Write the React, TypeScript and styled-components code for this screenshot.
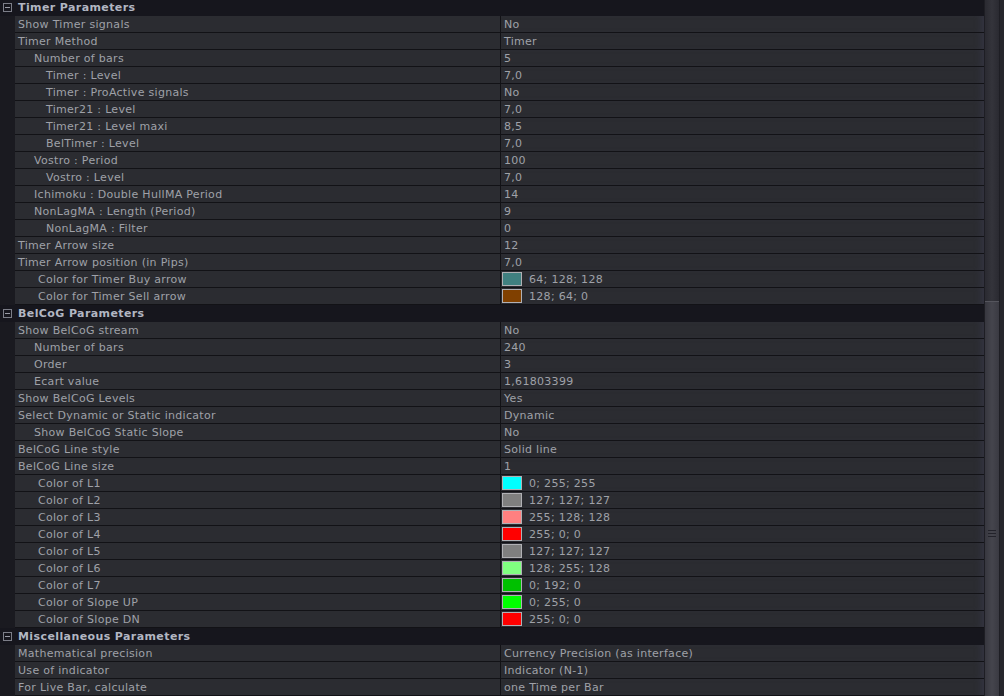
import styled, { createGlobalStyle } from 'styled-components';

const GlobalStyle = createGlobalStyle`
  html, body {
    margin: 0;
    padding: 0;
    background: #16161c;
    overflow: hidden;
  }
  body {
    font-family: 'DejaVu Sans', Verdana, sans-serif;
    font-size: 11px;
  }
`;

type Prop = {
  name: string;
  value: string;
  indent?: number;
  color?: string;
};

type Section = {
  title: string;
  props: Prop[];
};

const sections: Section[] = [
  {
    title: 'Timer Parameters',
    props: [
      { name: 'Show Timer signals', value: 'No' },
      { name: 'Timer Method', value: 'Timer' },
      { name: 'Number of bars', value: '5', indent: 16 },
      { name: 'Timer : Level', value: '7,0', indent: 28 },
      { name: 'Timer : ProActive signals', value: 'No', indent: 28 },
      { name: 'Timer21 : Level', value: '7,0', indent: 28 },
      { name: 'Timer21 : Level maxi', value: '8,5', indent: 28 },
      { name: 'BelTimer : Level', value: '7,0', indent: 28 },
      { name: 'Vostro : Period', value: '100', indent: 16 },
      { name: 'Vostro : Level', value: '7,0', indent: 28 },
      { name: 'Ichimoku : Double HullMA Period', value: '14', indent: 16 },
      { name: 'NonLagMA : Length (Period)', value: '9', indent: 16 },
      { name: 'NonLagMA : Filter', value: '0', indent: 28 },
      { name: 'Timer Arrow size', value: '12' },
      { name: 'Timer Arrow position (in Pips)', value: '7,0' },
      { name: 'Color for Timer Buy arrow', value: '64; 128; 128', indent: 20, color: '#408080' },
      { name: 'Color for Timer Sell arrow', value: '128; 64; 0', indent: 20, color: '#804000' },
    ],
  },
  {
    title: 'BelCoG Parameters',
    props: [
      { name: 'Show BelCoG stream', value: 'No' },
      { name: 'Number of bars', value: '240', indent: 16 },
      { name: 'Order', value: '3', indent: 16 },
      { name: 'Ecart value', value: '1,61803399', indent: 16 },
      { name: 'Show BelCoG Levels', value: 'Yes' },
      { name: 'Select Dynamic or Static indicator', value: 'Dynamic' },
      { name: 'Show BelCoG Static Slope', value: 'No', indent: 16 },
      { name: 'BelCoG Line style', value: 'Solid line' },
      { name: 'BelCoG Line size', value: '1' },
      { name: 'Color of L1', value: '0; 255; 255', indent: 20, color: '#00ffff' },
      { name: 'Color of L2', value: '127; 127; 127', indent: 20, color: '#7f7f7f' },
      { name: 'Color of L3', value: '255; 128; 128', indent: 20, color: '#ff8080' },
      { name: 'Color of L4', value: '255; 0; 0', indent: 20, color: '#ff0000' },
      { name: 'Color of L5', value: '127; 127; 127', indent: 20, color: '#7f7f7f' },
      { name: 'Color of L6', value: '128; 255; 128', indent: 20, color: '#80ff80' },
      { name: 'Color of L7', value: '0; 192; 0', indent: 20, color: '#00c000' },
      { name: 'Color of Slope UP', value: '0; 255; 0', indent: 20, color: '#00ff00' },
      { name: 'Color of Slope DN', value: '255; 0; 0', indent: 20, color: '#ff0000' },
    ],
  },
  {
    title: 'Miscellaneous Parameters',
    props: [
      { name: 'Mathematical precision', value: 'Currency Precision (as interface)' },
      { name: 'Use of indicator', value: 'Indicator (N-1)' },
      { name: 'For Live Bar, calculate', value: 'one Time per Bar' },
    ],
  },
];

const Frame = styled.div`
  display: flex;
  width: 1004px;
  height: 696px;
  overflow: hidden;
`;

const Grid = styled.div`
  width: 984px;
  margin-top: -1px;
  display: flex;
  flex-direction: column;
`;

const HeaderRow = styled.div`
  display: flex;
  align-items: center;
  height: 17px;
  flex-shrink: 0;
  background: #16161d;
`;

const Toggle = styled.div`
  width: 9px;
  height: 9px;
  box-sizing: border-box;
  margin: 0 6px 0 3px;
  border: 1px solid #7c7e88;
  position: relative;

  &::after {
    content: '';
    position: absolute;
    left: 1px;
    right: 1px;
    top: 3px;
    height: 1px;
    background: #9a9ca6;
  }
`;

const HeaderTitle = styled.span`
  font-weight: bold;
  letter-spacing: 0.4px;
  color: #b2b6c2;
  line-height: 17px;
`;

const Row = styled.div`
  display: flex;
  height: 17px;
  flex-shrink: 0;
`;

const Gutter = styled.div`
  width: 15px;
  flex-shrink: 0;
  background: #1a1a20;
`;

const Cell = styled.div`
  display: flex;
  align-items: center;
  box-sizing: border-box;
  height: 17px;
  background: #2b2c31;
  border-bottom: 1px solid #121216;
  color: #9fa1a8;
  letter-spacing: 0.3px;
  white-space: nowrap;
  overflow: hidden;
`;

const NameCell = styled(Cell)<{ $indent: number }>`
  width: 486px;
  padding-left: ${(p) => 3 + p.$indent}px;
  border-right: 1px solid #121216;
`;

const ValueCell = styled(Cell)`
  flex: 1;
  padding-left: 3px;
  box-shadow: inset -7px 0 6px -4px rgba(60, 60, 80, 0.5);
`;

const Swatch = styled.span<{ $color: string }>`
  width: 20px;
  height: 14px;
  box-sizing: border-box;
  margin: 0 7px 0 -2px;
  background: ${(p) => p.$color};
  border: 1px solid #b0b0b4;
`;

const ScrollBar = styled.div`
  width: 20px;
  display: flex;
  flex-direction: column;
  background: #1e1e24;
  border-right: 4px solid #26262c;
  box-sizing: border-box;
`;

const Track = styled.div`
  height: 301px;
  margin: 0 1px;
  background: linear-gradient(90deg, #2a2a31, #34343b 50%, #2a2a31);
`;

const Thumb = styled.div`
  flex: 1;
  margin: 0 1px;
  background: linear-gradient(90deg, #37373f, #45454d 50%, #3a3a42);
  border-top: 1px solid #55555d;
  display: flex;
  flex-direction: column;
  align-items: center;
  padding-top: 228px;
  gap: 2px;
`;

const Grip = styled.span`
  width: 8px;
  height: 1px;
  background: #22222a;
`;

export default function App() {
  return (
    <>
      <GlobalStyle />
      <Frame>
        <Grid>
          {sections.map((section) => (
            <div key={section.title}>
              <HeaderRow>
                <Toggle />
                <HeaderTitle>{section.title}</HeaderTitle>
              </HeaderRow>
              {section.props.map((prop, i) => (
                <Row key={i}>
                  <Gutter />
                  <NameCell $indent={prop.indent ?? 0}>{prop.name}</NameCell>
                  <ValueCell>
                    {prop.color && <Swatch $color={prop.color} />}
                    {prop.value}
                  </ValueCell>
                </Row>
              ))}
            </div>
          ))}
        </Grid>
        <ScrollBar>
          <Track />
          <Thumb>
            <Grip />
            <Grip />
            <Grip />
          </Thumb>
        </ScrollBar>
      </Frame>
    </>
  );
}
